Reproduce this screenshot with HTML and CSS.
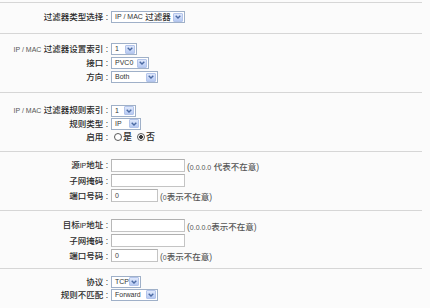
FILE: index.html
```html
<!DOCTYPE html>
<html lang="zh">
<head>
<meta charset="utf-8">
<title>过滤器</title>
<link rel="stylesheet" href="styles.css">
</head>
<body>
<div class="page">
  <section class="sec s1">
    <div class="form r14">
      <div class="lbl">过滤器类型选择 :</div>
      <div class="ctl"><span class="sel w74"><span class="en">IP / MAC</span>&nbsp;过滤器<span class="arr"><svg width="6" height="4" viewBox="0 0 6 4"><path d="M0.7 0.7 L3 3 L5.3 0.7" /></svg></span></span></div>
    </div>
  </section>

  <section class="sec s2">
    <div class="form r14">
      <div class="lbl"><span class="en lite">IP / MAC</span> 过滤器设置索引 :</div>
      <div class="ctl"><span class="sel w26"><span class="en">1</span><span class="arr"><svg width="6" height="4" viewBox="0 0 6 4"><path d="M0.7 0.7 L3 3 L5.3 0.7" /></svg></span></span></div>
      <div class="lbl">接口 :</div>
      <div class="ctl"><span class="sel w38"><span class="en">PVC0</span><span class="arr"><svg width="6" height="4" viewBox="0 0 6 4"><path d="M0.7 0.7 L3 3 L5.3 0.7" /></svg></span></span></div>
      <div class="lbl">方向 :</div>
      <div class="ctl"><span class="sel w47"><span class="en">Both</span><span class="arr"><svg width="6" height="4" viewBox="0 0 6 4"><path d="M0.7 0.7 L3 3 L5.3 0.7" /></svg></span></span></div>
    </div>
  </section>

  <section class="sec s3">
    <div class="form r13">
      <div class="lbl"><span class="en lite">IP / MAC</span> 过滤器规则索引 :</div>
      <div class="ctl"><span class="sel w25"><span class="en">1</span><span class="arr"><svg width="6" height="4" viewBox="0 0 6 4"><path d="M0.7 0.7 L3 3 L5.3 0.7" /></svg></span></span></div>
      <div class="lbl">规则类型 :</div>
      <div class="ctl"><span class="sel w30"><span class="en">IP</span><span class="arr"><svg width="6" height="4" viewBox="0 0 6 4"><path d="M0.7 0.7 L3 3 L5.3 0.7" /></svg></span></span></div>
      <div class="lbl">启用 :</div>
      <div class="ctl radios"><span class="radio"></span><span class="rtxt">是</span><span class="radio on"></span><span class="rtxt">否</span></div>
    </div>
  </section>

  <section class="sec s4">
    <div class="form r15">
      <div class="lbl">源<span class="en">IP</span>地址 :</div>
      <div class="ctl"><span class="inp w74"></span><span class="hint">(<span class="en">0.0.0.0</span> 代表不在意)</span></div>
      <div class="lbl">子网掩码 :</div>
      <div class="ctl"><span class="inp w74"></span></div>
      <div class="lbl">端口号码 :</div>
      <div class="ctl"><span class="inp w47"><span class="en">0</span></span><span class="hint">(<span class="en">0</span>表示不在意)</span></div>
    </div>
  </section>

  <section class="sec s5">
    <div class="form r15">
      <div class="lbl">目标<span class="en">IP</span>地址 :</div>
      <div class="ctl"><span class="inp w74"></span><span class="hint">(<span class="en">0.0.0.0</span>表示不在意)</span></div>
      <div class="lbl">子网掩码 :</div>
      <div class="ctl"><span class="inp w74"></span></div>
      <div class="lbl">端口号码 :</div>
      <div class="ctl"><span class="inp w47"><span class="en">0</span></span><span class="hint">(<span class="en">0</span>表示不在意)</span></div>
    </div>
  </section>

  <section class="sec s6">
    <div class="form r13">
      <div class="lbl">协议 :</div>
      <div class="ctl"><span class="sel w30"><span class="en">TCP</span><span class="arr"><svg width="6" height="4" viewBox="0 0 6 4"><path d="M0.7 0.7 L3 3 L5.3 0.7" /></svg></span></span></div>
      <div class="lbl">规则不匹配 :</div>
      <div class="ctl"><span class="sel w47"><span class="en">Forward</span><span class="arr"><svg width="6" height="4" viewBox="0 0 6 4"><path d="M0.7 0.7 L3 3 L5.3 0.7" /></svg></span></span></div>
    </div>
  </section>
</div>
</body>
</html>
```

FILE: styles.css
```css
html, body {
  margin: 0;
  padding: 0;
  background: #fbfbfb;
}
body {
  width: 430px;
  height: 308px;
  overflow: hidden;
  font-family: "Liberation Sans", "Noto Sans CJK SC", sans-serif;
  font-size: 8.5px;
  font-weight: 500;
  color: #2a2a2a;
}
.page {
  padding-top: 2px;
}
.sec {
  width: 422px;
  border-top: 1px solid #d6d6d6;
}
.s1 { padding: 7px 0 9px; }
.s2 { padding: 8px 0 8px; }
.s3 { padding: 11px 0 8px; }
.s4 { padding: 6px 0 7px; }
.s5 { padding: 7px 0 5px; }
.s6 { padding: 6px 0 0; }

.form {
  display: grid;
  grid-template-columns: 108px 1fr;
  column-gap: 3px;
  align-items: center;
}
.r13 { grid-auto-rows: 13px; }
.r14 { grid-auto-rows: 14px; }
.r15 { grid-auto-rows: 15px; }

.lbl {
  text-align: right;
  white-space: nowrap;
  line-height: 12px;
}
.en {
  font-size: 7px;
  font-weight: 400;
}
.lite {
  color: #555;
}
.ctl {
  display: flex;
  align-items: center;
  height: 100%;
}

.sel {
  display: flex;
  align-items: center;
  box-sizing: border-box;
  height: 12px;
  padding: 0 1px 0 3px;
  border: 1px solid #9fb0c8;
  background: #fff;
  white-space: nowrap;
  line-height: 10px;
  color: #333;
}
.sel .arr {
  margin-left: auto;
  box-sizing: border-box;
  width: 10px;
  height: 9px;
  flex: none;
  display: flex;
  align-items: center;
  justify-content: center;
  background: linear-gradient(#dfe8fb, #b6c9f2);
  border: 1px solid #b3c4ea;
  border-radius: 1px;
}
.sel .arr svg path {
  fill: none;
  stroke: #4b6aa3;
  stroke-width: 1.4;
}
.w25 { width: 25px; }
.w26 { width: 26px; }
.w30 { width: 30px; }
.w38 { width: 38px; }
.w47 { width: 47px; }
.w74 { width: 74px; }

.inp {
  display: flex;
  align-items: center;
  box-sizing: border-box;
  height: 13px;
  padding-left: 3px;
  border: 1px solid #c4c4c4;
  border-top-color: #b0b0b0;
  border-left-color: #b8b8b8;
  background: #fff;
  color: #444;
}
.hint {
  margin-left: 2px;
  color: #555;
  white-space: nowrap;
}

.radios {
  padding-left: 3px;
}
.radio {
  box-sizing: border-box;
  width: 8px;
  height: 8px;
  border: 1px solid #5a5a5a;
  border-radius: 50%;
  background: #fff;
}
.radio.on {
  background: radial-gradient(circle, #3a3a3a 0 1.6px, #fff 2.2px);
}
.rtxt {
  margin: 0 5px 0 1px;
  font-size: 9px;
}
```
